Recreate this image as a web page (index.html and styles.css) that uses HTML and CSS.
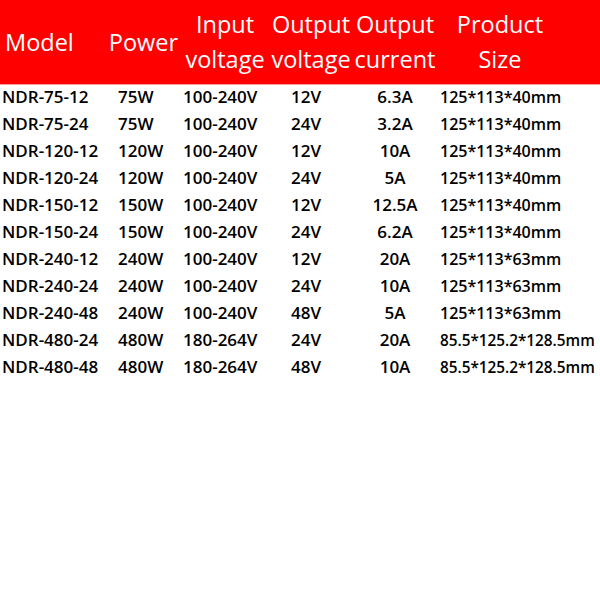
FILE: index.html
```html
<!DOCTYPE html>
<html>
<head>
<meta charset="utf-8">
<link rel="stylesheet" href="styles.css">
</head>
<body>
<div class="sheet">
  <div class="head">
    <div class="h h-model">Model</div>
    <div class="h h-power">Power</div>
    <div class="h h-in"><span>Input</span><span>voltage</span></div>
    <div class="h h-ov"><span>Output</span><span>voltage</span></div>
    <div class="h h-oc"><span>Output</span><span>current</span></div>
    <div class="h h-size"><span>Product</span><span>Size</span></div>
  </div>
  <div class="rows">
    <div class="row"><span class="c-model">NDR-75-12</span><span class="c-power">75W</span><span class="c-in">100-240V</span><span class="c-ov">12V</span><span class="c-oc">6.3A</span><span class="c-size">125*113*40mm</span></div>
    <div class="row"><span class="c-model">NDR-75-24</span><span class="c-power">75W</span><span class="c-in">100-240V</span><span class="c-ov">24V</span><span class="c-oc">3.2A</span><span class="c-size">125*113*40mm</span></div>
    <div class="row"><span class="c-model">NDR-120-12</span><span class="c-power">120W</span><span class="c-in">100-240V</span><span class="c-ov">12V</span><span class="c-oc">10A</span><span class="c-size">125*113*40mm</span></div>
    <div class="row"><span class="c-model">NDR-120-24</span><span class="c-power">120W</span><span class="c-in">100-240V</span><span class="c-ov">24V</span><span class="c-oc">5A</span><span class="c-size">125*113*40mm</span></div>
    <div class="row"><span class="c-model">NDR-150-12</span><span class="c-power">150W</span><span class="c-in">100-240V</span><span class="c-ov">12V</span><span class="c-oc">12.5A</span><span class="c-size">125*113*40mm</span></div>
    <div class="row"><span class="c-model">NDR-150-24</span><span class="c-power">150W</span><span class="c-in">100-240V</span><span class="c-ov">24V</span><span class="c-oc">6.2A</span><span class="c-size">125*113*40mm</span></div>
    <div class="row"><span class="c-model">NDR-240-12</span><span class="c-power">240W</span><span class="c-in">100-240V</span><span class="c-ov">12V</span><span class="c-oc">20A</span><span class="c-size">125*113*63mm</span></div>
    <div class="row"><span class="c-model">NDR-240-24</span><span class="c-power">240W</span><span class="c-in">100-240V</span><span class="c-ov">24V</span><span class="c-oc">10A</span><span class="c-size">125*113*63mm</span></div>
    <div class="row"><span class="c-model">NDR-240-48</span><span class="c-power">240W</span><span class="c-in">100-240V</span><span class="c-ov">48V</span><span class="c-oc">5A</span><span class="c-size">125*113*63mm</span></div>
    <div class="row"><span class="c-model">NDR-480-24</span><span class="c-power">480W</span><span class="c-in">180-264V</span><span class="c-ov">24V</span><span class="c-oc">20A</span><span class="c-size small">85.5*125.2*128.5mm</span></div>
    <div class="row"><span class="c-model">NDR-480-48</span><span class="c-power">480W</span><span class="c-in">180-264V</span><span class="c-ov">48V</span><span class="c-oc">10A</span><span class="c-size small">85.5*125.2*128.5mm</span></div>
  </div>
</div>
</body>
</html>
```
FILE: styles.css
```css
html, body {
  margin: 0;
  padding: 0;
  background: #ffffff;
}
.sheet {
  width: 600px;
  height: 600px;
  font-family: "Open Sans", "Noto Sans", sans-serif;
}
.head {
  height: 84px;
  background: #ff0000;
  color: #ffffff;
  display: flex;
  align-items: center;
  border-bottom: 1px solid #f4a0a0;
}
.h {
  font-size: 23.5px;
  line-height: 35px;
  display: flex;
  flex-direction: column;
  align-items: center;
  white-space: nowrap;
}
.h-model { width: 105px; align-items: flex-start; padding-left: 5px; box-sizing: border-box; }
.h-power { width: 77px; }
.h-in { width: 86px; }
.h-ov { width: 86px; }
.h-oc { width: 82px; }
.h-size { width: 128px; }
.row {
  height: 27px;
  box-sizing: border-box;
  padding-bottom: 4px;
  display: flex;
  align-items: center;
  font-size: 17px;
  font-weight: 600;
  color: #000000;
  white-space: nowrap;
}
.c-model { width: 118px; padding-left: 2px; box-sizing: border-box; }
.c-power { width: 65px; }
.c-in { width: 108px; }
.c-ov { width: 59px; }
.c-oc { width: 90px; text-align: center; }
.c-size { font-size: 16px; }
.c-size.small { font-size: 15.3px; }
```
